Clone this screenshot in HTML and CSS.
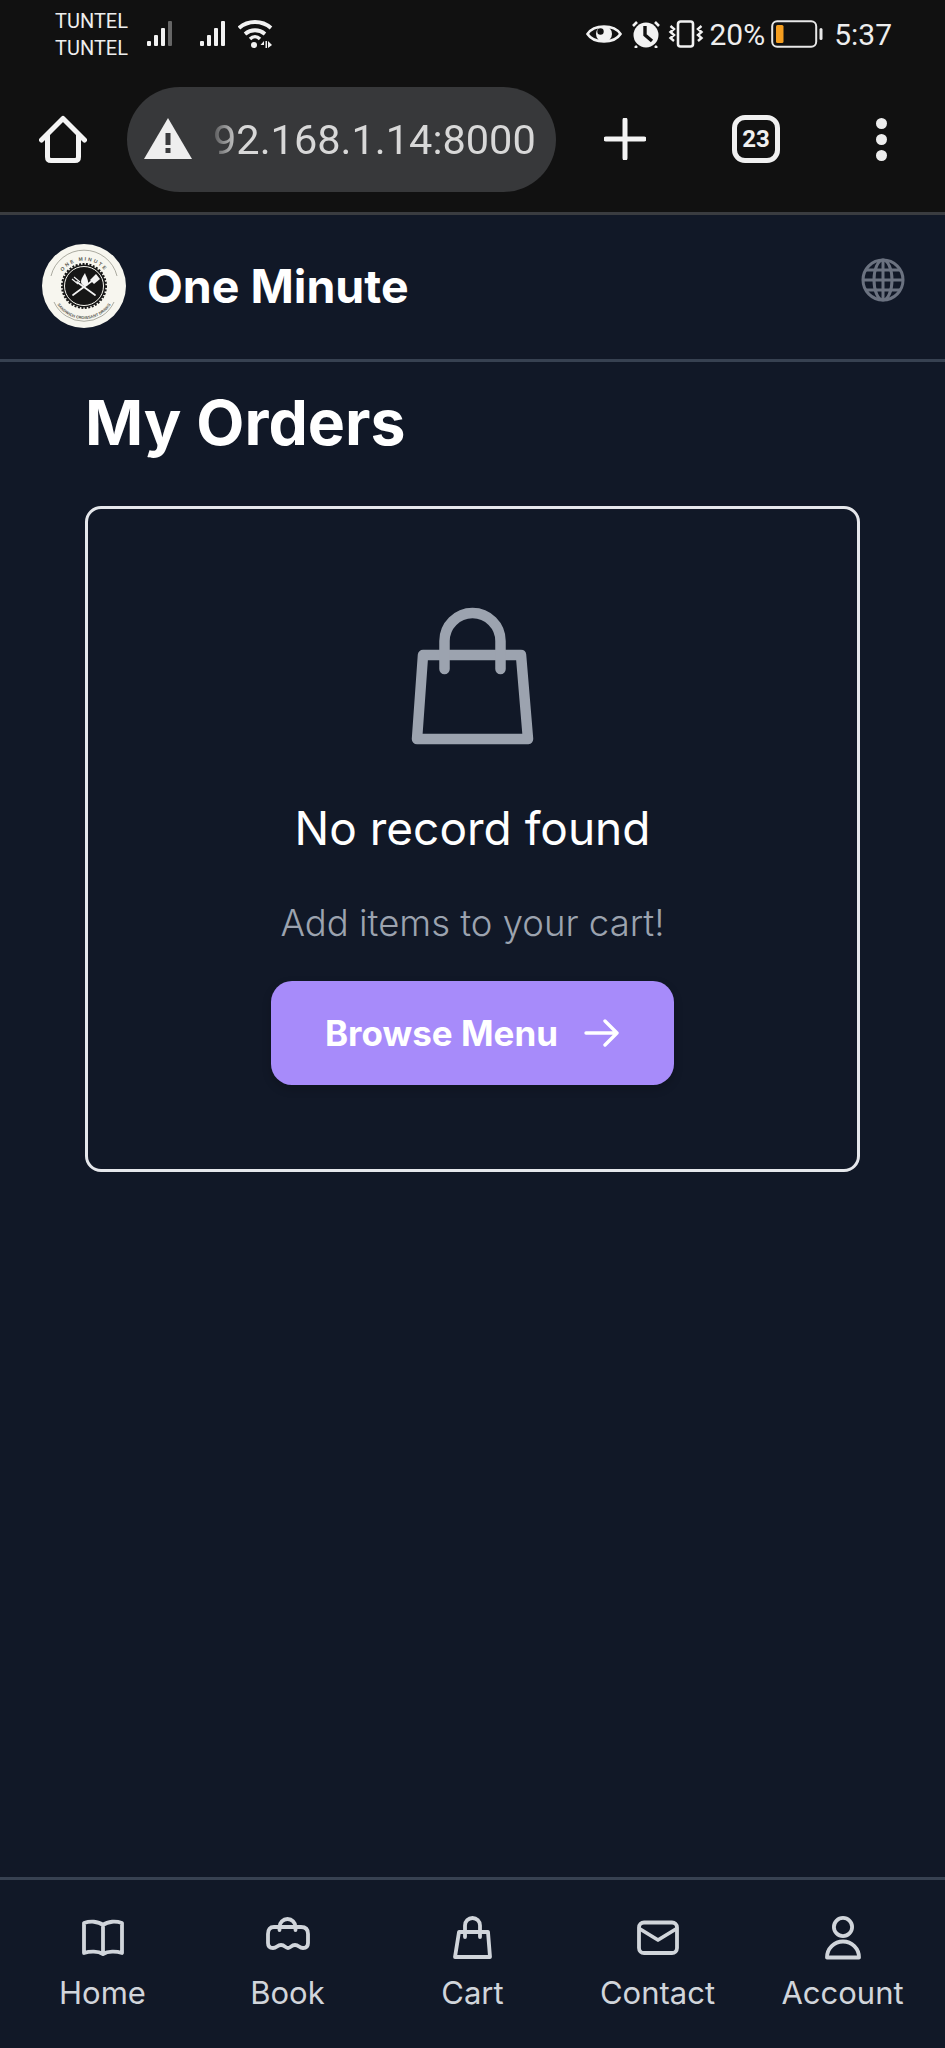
FILE: index.html
```html
<!DOCTYPE html>
<html lang="en">
  <head>
    <meta charset="UTF-8" />
    <meta name="viewport" content="width=device-width, initial-scale=1.0" />
    <title>My Orders</title>
    <link rel="stylesheet" href="styles.css">
  </head>

  <body>
    <div class="status-bar">
      <div class="status-left">
        <div class="carriers">
          <span>TUNTEL</span>
          <span>TUNTEL</span>
        </div>
        <svg class="signal signal-one" viewBox="0 0 30 28">
          <rect x="0" y="21" width="4" height="5" rx="1" fill="#f2f2f2" />
          <rect x="7" y="15" width="4" height="11" rx="1" fill="#f2f2f2" />
          <rect x="14" y="8" width="4" height="18" rx="1" fill="#f2f2f2" />
          <rect x="21" y="1" width="4" height="25" rx="1" fill="#666" />
        </svg>
        <svg class="signal signal-two" viewBox="0 0 30 28">
          <rect x="0" y="21" width="4" height="5" rx="1" fill="#f2f2f2" />
          <rect x="7" y="15" width="4" height="11" rx="1" fill="#f2f2f2" />
          <rect x="14" y="8" width="4" height="18" rx="1" fill="#f2f2f2" />
          <rect x="21" y="1" width="4" height="25" rx="1" fill="#f2f2f2" />
        </svg>
        <svg class="wifi" viewBox="0 0 36 28">
          <path d="M1 8 C10 0 24 0 33 8" fill="none" stroke="#f2f2f2" stroke-width="3.800" />
          <path d="M7 14 C13 9 21 9 27 14" fill="none" stroke="#f2f2f2" stroke-width="3.800" />
          <path d="M12 19 C15 16 19 16 22 19" fill="none" stroke="#f2f2f2" stroke-width="3.400" />
          <circle cx="16" cy="25" r="3" fill="#f2f2f2" />
          <path d="M26 21 L22.500 25 H26 Z M27.500 21 H29 V28 H27.500 Z M30 21 L34 25 L30 28 Z" fill="#f2f2f2" />
        </svg>
      </div>
      <div class="status-right">
        <svg class="eye" viewBox="0 0 36 24">
          <path d="M1.500 12 C8 2 28 2 34.500 12 C28 22 8 22 1.500 12 Z" fill="none" stroke="#f2f2f2" stroke-width="2.600" />
          <circle cx="18" cy="12" r="8" fill="#f2f2f2" />
          <circle cx="14.500" cy="9.500" r="3.200" fill="#111" />
        </svg>
        <svg class="alarm" viewBox="0 0 30 28">
          <circle cx="15" cy="15" r="12.500" fill="#f2f2f2" />
          <path d="M14 6 V15 L21 21" fill="none" stroke="#111" stroke-width="3.400" />
          <path d="M2 6 L6 2 M24 2 L28 6 M6 26 L4 28 M24 26 L26 28" fill="none" stroke="#f2f2f2" stroke-width="2.600" />
        </svg>
        <svg class="vibrate" viewBox="0 0 36 28">
          <rect x="10" y="1.500" width="15" height="25" rx="2.500" fill="none" stroke="#f2f2f2" stroke-width="2.600" />
          <path d="M2.500 6 L6 9 L2.500 12 L6 15 L2.500 18 L6 21 M33.500 6 L30 9 L33.500 12 L30 15 L33.500 18 L30 21" fill="none" stroke="#f2f2f2" stroke-width="2.400" />
        </svg>
        <span class="battery-text">20%</span>
        <svg class="battery" viewBox="0 0 52 28">
          <rect x="1.200" y="1.200" width="44" height="25.600" rx="5" fill="none" stroke="#e8e8e8" stroke-width="2" />
          <rect x="5" y="5" width="7.500" height="18" rx="1.500" fill="#f59e1f" />
          <rect x="48.500" y="8" width="3" height="12" rx="1.500" fill="#e8e8e8" />
        </svg>
        <span class="clock">5:37</span>
      </div>
    </div>

    <div class="browser-bar">
      <svg class="browser-home" viewBox="0 0 48 48">
        <path d="M2.500 25 L24 3.500 L45.500 25 M8.500 20 V42 Q8.500 45.500 12 45.500 H36 Q39.500 45.500 39.500 42 V20" fill="none" stroke="#f4f4f4" stroke-width="5" stroke-linecap="round" stroke-linejoin="round" />
      </svg>
      <div class="url-pill">
        <svg class="warn" viewBox="0 0 48 42">
          <path d="M24 0 L48 41 H0 Z" fill="#eeeeee" />
          <rect x="21.500" y="15" width="5" height="12" fill="#3a3b3d" />
          <rect x="21.500" y="30" width="5" height="5" fill="#3a3b3d" />
        </svg>
        <span class="url-text">92.168.1.14:8000</span>
      </div>
      <svg class="browser-plus" viewBox="0 0 42 42">
        <path d="M21 2 V40 M2 21 H40" fill="none" stroke="#f4f4f4" stroke-width="5" stroke-linecap="round" />
      </svg>
      <div class="tab-count">23</div>
      <div class="browser-menu">
        <span></span>
        <span></span>
        <span></span>
      </div>
    </div>

    <header class="site-header">
      <div class="brand">
        <svg class="logo" viewBox="0 0 84 84">
          <circle cx="42" cy="42" r="42" fill="#f7f6ef" />
          <path id="logo-top" d="M16 38 A26.500 26.500 0 0 1 68 38" fill="none" />
          <path id="logo-bottom" d="M11 51 A32 32 0 0 0 73 51" fill="none" />
          <text class="logo-top-text" letter-spacing="1.800"><textPath href="#logo-top" startOffset="50%" text-anchor="middle">ONE MINUTE</textPath></text>
          <text class="logo-bottom-text"><textPath href="#logo-bottom" startOffset="50%" text-anchor="middle">SANDWICH CROISSANT DRINKS</textPath></text>
          <path d="M9 32 A34 34 0 0 1 75 32" fill="none" stroke="#8a897e" stroke-width="0.700" />
          <path d="M12 58 A33 33 0 0 0 72 58" fill="none" stroke="#8a897e" stroke-width="0.700" />
          <circle cx="42" cy="42" r="21.500" fill="#161616" />
          <circle cx="42" cy="42" r="22" fill="none" stroke="#161616" stroke-width="2" stroke-dasharray="2 1.500" />
          <circle cx="42" cy="42" r="19.500" fill="none" stroke="#f7f6ef" stroke-width="1" />
          <path d="M31 51 L50 37 M53 51 L35 38" stroke="#f4f4f4" stroke-width="1.700" stroke-linecap="round" />
          <path d="M48 36 L54 30 L58 35 L52 40 Z" fill="#f4f4f4" />
          <path d="M42 42 C37 39 39 35 43 29 C44 33 48 37 45 42 Z" fill="#f4f4f4" />
          <path d="M30 35 L36 40 M32 33 L38 38" stroke="#f4f4f4" stroke-width="1.100" />
        </svg>
        <span class="brand-name">One Minute</span>
      </div>
      <svg class="globe" viewBox="0 0 44 44">
        <g fill="none" stroke="#6b7280" stroke-width="3">
          <circle cx="22" cy="22" r="20" />
          <ellipse cx="22" cy="22" rx="9" ry="20" />
          <path d="M22 2 V42 M2 22 H42 M5 12 H39 M5 32 H39" />
        </g>
      </svg>
    </header>

    <main class="orders">
      <h1 class="orders-title">My Orders</h1>
      <section class="empty-card">
        <svg class="empty-icon" viewBox="0 0 124 140">
          <g fill="none" stroke="#9ca3af" stroke-width="10.500" stroke-linecap="round" stroke-linejoin="round">
            <path d="M12 48 H110 L117 132 H6 Z" />
            <path d="M33.500 62 V34 A28 28 0 0 1 89.500 34 V62" />
          </g>
        </svg>
        <h2 class="empty-title">No record found</h2>
        <p class="empty-text">Add items to your cart!</p>
        <a class="browse-btn" href="#">
          <span>Browse Menu</span>
          <svg class="browse-arrow" viewBox="0 0 36 28">
            <path d="M2 14 H33 M21 2 L33 14 L21 26" fill="none" stroke="#fff" stroke-width="3.400" stroke-linecap="round" stroke-linejoin="round" />
          </svg>
        </a>
      </section>
    </main>

    <nav class="bottom-nav">
      <a class="nav-item" href="#">
        <svg class="nav-icon" viewBox="0 0 48 48">
          <path d="M24 15 C19 11 11 11 5 13 V43 C11 41 19 41 24 44 C29 41 37 41 43 43 V13 C37 11 29 11 24 15 Z M24 15 V44" />
        </svg>
        <span>Home</span>
      </a>
      <a class="nav-item" href="#">
        <svg class="nav-icon" viewBox="0 0 48 48">
          <path d="M10 17 H37 Q44 17 44 24 V33 Q44 38 39 38 C35 38 35 35 31 35 C27 35 27 38 24 38 C21 38 21 35 17 35 C13 35 13 38 9 38 Q4 38 4 33 V24 Q4 17 10 17 Z" />
          <path d="M15.500 20 V17 A8 8 0 0 1 31.500 17 V20" />
        </svg>
        <span>Book</span>
      </a>
      <a class="nav-item" href="#">
        <svg class="nav-icon" viewBox="0 0 48 48">
          <path d="M10 22 H39 L41 47 H6 Z" />
          <path d="M16 27 V15.500 A7.500 7.500 0 0 1 31 15.500 V27" />
        </svg>
        <span>Cart</span>
      </a>
      <a class="nav-item" href="#">
        <svg class="nav-icon" viewBox="0 0 48 48">
          <rect x="5" y="12.500" width="38" height="30.500" rx="5" />
          <path d="M6 19 L24 30 L42 19" />
        </svg>
        <span>Contact</span>
      </a>
      <a class="nav-item" href="#">
        <svg class="nav-icon" viewBox="0 0 48 48">
          <circle cx="24" cy="17" r="9.100" />
          <path d="M8 47.500 A16 16 0 0 1 40 47.500 Z" />
        </svg>
        <span>Account</span>
      </a>
    </nav>
  </body>
</html>
```

FILE: styles.css
```css
* {
  box-sizing: border-box;
}

body {
  margin: 0;
  display: flex;
  flex-direction: column;
  height: 100vh;
  background-color: #111827;
  color: #fff;
  font-family: Inter, "Noto Sans", sans-serif;
}

a {
  color: inherit;
  text-decoration: none;
}

svg {
  display: block;
  flex-shrink: 0;
}

/* phone status bar */
.status-bar {
  display: flex;
  justify-content: space-between;
  align-items: center;
  height: 72px;
  padding: 0 53px 4px 55px;
  background-color: #111111;
  color: #eeeeee;
  font-family: Roboto, sans-serif;
}

.status-left,
.status-right {
  display: flex;
  align-items: center;
}

.carriers {
  display: flex;
  flex-direction: column;
  gap: 5px;
  margin-right: 19px;
  font-size: 20px;
  line-height: 22px;
}

.signal {
  width: 30px;
  height: 28px;
}

.signal-one {
  margin-right: 23px;
}

.wifi {
  width: 36px;
  height: 28px;
  margin-left: 8px;
}

.eye {
  width: 36px;
  height: 24px;
  margin-right: 9px;
}

.alarm {
  width: 30px;
  height: 28px;
  margin-right: 7px;
}

.vibrate {
  width: 36px;
  height: 28px;
  margin-right: 5px;
}

.battery-text,
.clock {
  font-size: 30px;
}

.battery {
  width: 52px;
  height: 28px;
  margin: 0 11px 0 6px;
}

/* browser chrome */
.browser-bar {
  display: flex;
  align-items: center;
  height: 140px;
  padding: 0 0 6px 39px;
  background-color: #111111;
}

.browser-home {
  width: 48px;
  height: 48px;
  margin-right: 40px;
}

.url-pill {
  display: flex;
  align-items: center;
  width: 429px;
  height: 105px;
  padding-left: 17px;
  border-radius: 53px;
  background-color: #37383a;
}

.warn {
  width: 48px;
  height: 42px;
  margin-right: 21px;
}

.url-text {
  font-family: Roboto, sans-serif;
  font-size: 41.500px;
  color: #d8d8d8;
  -webkit-mask-image: linear-gradient(to right, rgba(0, 0, 0, 0.2), #000 26px);
  mask-image: linear-gradient(to right, rgba(0, 0, 0, 0.2), #000 26px);
}

.browser-plus {
  width: 42px;
  height: 42px;
  margin-left: 48px;
}

.tab-count {
  display: flex;
  justify-content: center;
  align-items: center;
  width: 48px;
  height: 48px;
  margin-left: 86px;
  border: 5px solid #f0f0f0;
  border-radius: 13px;
  font-family: Roboto, sans-serif;
  font-size: 24px;
  font-weight: 700;
  color: #f0f0f0;
}

.browser-menu {
  display: flex;
  flex-direction: column;
  gap: 5px;
  margin-left: 96px;
}

.browser-menu span {
  width: 11px;
  height: 11px;
  border-radius: 50%;
  background-color: #eeeeee;
}

/* site header */
.site-header {
  display: flex;
  justify-content: space-between;
  height: 150px;
  padding: 29px 40px 0 42px;
  border-top: 3px solid #3a3c40;
  border-bottom: 3px solid #374151;
}

.brand {
  display: flex;
  align-items: center;
  height: 84px;
  gap: 21px;
}

.logo {
  width: 84px;
  height: 84px;
}

.logo-top-text {
  font-family: "Liberation Sans", sans-serif;
  font-size: 5px;
  font-weight: 700;
  fill: #55544c;
}

.logo-bottom-text {
  font-family: "Liberation Sans", sans-serif;
  font-size: 4px;
  font-weight: 700;
  fill: #55544c;
}

.brand-name {
  font-size: 46.500px;
  font-weight: 700;
}

.globe {
  width: 44px;
  height: 44px;
  margin-top: 14px;
}

/* orders */
.orders {
  flex: 1;
  padding: 0 85px;
}

.orders-title {
  margin: 22px 0 46px;
  font-size: 62.500px;
  line-height: 76px;
  font-weight: 700;
}

.empty-card {
  display: flex;
  flex-direction: column;
  align-items: center;
  height: 666px;
  padding-top: 98px;
  border: 3px solid #e5e7eb;
  border-radius: 16px;
}

.empty-icon {
  width: 124px;
  height: 140px;
}

.empty-title {
  margin: 49px 0 0;
  font-size: 46px;
  line-height: 64px;
  font-weight: 400;
}

.empty-text {
  margin: 38px 0 0;
  font-size: 36.500px;
  line-height: 50px;
  font-weight: 300;
  color: #9ca3af;
}

.browse-btn {
  display: flex;
  justify-content: center;
  align-items: center;
  gap: 26px;
  width: 403px;
  height: 104px;
  margin-top: 33px;
  border-radius: 21px;
  background-color: #a78bfa;
  box-shadow: 0 4px 10px rgba(0, 0, 0, 0.2);
  font-size: 35px;
  font-weight: 700;
}

.browse-arrow {
  width: 36px;
  height: 28px;
}

/* bottom tabs */
.bottom-nav {
  display: grid;
  grid-template-columns: repeat(5, 1fr);
  height: 171px;
  padding: 30px 10px 0;
  border-top: 3px solid #374151;
  color: #d1d5db;
}

.nav-item {
  display: flex;
  flex-direction: column;
  align-items: center;
  gap: 13px;
  font-size: 31px;
  line-height: 44px;
}

.nav-icon {
  width: 48px;
  height: 48px;
  overflow: visible;
  fill: none;
  stroke: #d1d5db;
  stroke-width: 3.800;
  stroke-linecap: round;
  stroke-linejoin: round;
}
```
